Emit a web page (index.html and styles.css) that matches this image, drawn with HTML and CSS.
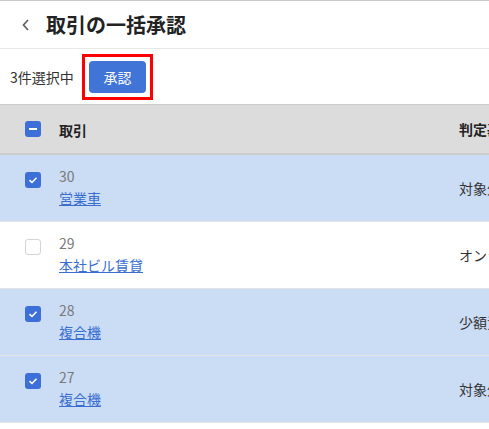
FILE: index.html
```html
<!DOCTYPE html>
<html lang="ja">
<head>
<meta charset="utf-8">
<link rel="stylesheet" href="styles.css">
</head>
<body>
<div class="page">
  <header class="topbar">
    <svg class="back" width="10" height="14" viewBox="0 0 10 14"><path d="M7 2 L2.5 7 L7 12" fill="none" stroke="#666" stroke-width="1.8"/></svg>
    <h1 class="title">取引の一括承認</h1>
  </header>
  <div class="toolbar">
    <span class="count">3件選択中</span>
    <span class="highlight"><button class="approve">承認</button></span>
  </div>
  <div class="table">
    <div class="row head">
      <div class="cb-cell"><span class="cb on"><svg width="16" height="16" viewBox="0 0 16 16"><path d="M4 8 H12" stroke="#fff" stroke-width="2"/></svg></span></div>
      <div class="main-cell"><span class="th">取引</span></div>
      <div class="side-cell"><span class="th">判定基準</span></div>
    </div>
    <div class="row sel">
      <div class="cb-cell"><span class="cb on"><svg width="16" height="16" viewBox="0 0 16 16"><path d="M4.5 8.2 L7 10.5 L11.5 5.8" fill="none" stroke="#fff" stroke-width="1.6"/></svg></span></div>
      <div class="main-cell"><div class="num">30</div><a class="link" href="#">営業車</a></div>
      <div class="side-cell"><span class="val">対象外</span></div>
    </div>
    <div class="row">
      <div class="cb-cell"><span class="cb"></span></div>
      <div class="main-cell"><div class="num">29</div><a class="link" href="#">本社ビル賃貸</a></div>
      <div class="side-cell"><span class="val">オンライン</span></div>
    </div>
    <div class="row sel">
      <div class="cb-cell"><span class="cb on"><svg width="16" height="16" viewBox="0 0 16 16"><path d="M4.5 8.2 L7 10.5 L11.5 5.8" fill="none" stroke="#fff" stroke-width="1.6"/></svg></span></div>
      <div class="main-cell"><div class="num">28</div><a class="link" href="#">複合機</a></div>
      <div class="side-cell"><span class="val">少額資産</span></div>
    </div>
    <div class="row sel">
      <div class="cb-cell"><span class="cb on"><svg width="16" height="16" viewBox="0 0 16 16"><path d="M4.5 8.2 L7 10.5 L11.5 5.8" fill="none" stroke="#fff" stroke-width="1.6"/></svg></span></div>
      <div class="main-cell"><div class="num">27</div><a class="link" href="#">複合機</a></div>
      <div class="side-cell"><span class="val">対象外</span></div>
    </div>
  </div>
</div>
</body>
</html>
```

FILE: styles.css
```css
html, body {
  margin: 0;
  padding: 0;
  background: #fff;
}
body {
  width: 489px;
  height: 429px;
  overflow: hidden;
  font-family: "Noto Sans CJK JP", "Noto Sans", sans-serif;
  color: #222;
}
.page {
  border-top: 1px solid #cacaca;
  width: 489px;
  overflow: hidden;
}
.topbar {
  height: 47px;
  display: flex;
  align-items: center;
  border-bottom: 1px solid #e8e8e8;
  padding-left: 21px;
}
.back {
  display: block;
  margin-right: 15px;
}
.title {
  margin: 0;
  font-size: 20px;
  font-weight: 700;
  color: #222;
}
.toolbar {
  height: 55px;
  display: flex;
  align-items: center;
  padding-left: 10px;
}
.count {
  font-size: 14px;
  color: #333;
  width: 72px;
}
.highlight {
  display: block;
  border: 3px solid #ff0000;
  padding: 4px;
  line-height: 0;
}
.approve {
  width: 57px;
  height: 32px;
  border: none;
  border-radius: 4px;
  background: #4074d6;
  color: #fff;
  font-family: inherit;
  font-size: 14px;
  line-height: 32px;
  padding: 0;
}
.table {
  width: 560px;
}
.row {
  display: flex;
  height: 66px;
  border-bottom: 1px solid #e4e4e4;
  background: #fff;
}
.row.sel {
  background: #cbdcf5;
}
.row.head {
  height: 48px;
  background: #dcdcdc;
  border-top: 1px solid #cccccc;
  border-bottom: 2px solid #cccccc;
  align-items: center;
}
.cb-cell {
  flex: none;
  width: 34px;
  padding-left: 25px;
  padding-top: 17px;
}
.row.head .cb-cell {
  padding-top: 0;
  height: 16px;
}
.cb {
  display: block;
  width: 16px;
  height: 16px;
  box-sizing: border-box;
  border-radius: 3px;
  border: 1.5px solid #d4d4d4;
  background: #fff;
}
.cb.on {
  border: none;
  background: #3d6fd8;
}
.cb svg {
  display: block;
}
.main-cell {
  flex: none;
  width: 400px;
  padding-top: 12px;
}
.row.head .main-cell,
.row.head .side-cell {
  padding-top: 0;
}
.th {
  font-size: 14px;
  font-weight: 700;
  color: #222;
}
.num {
  font-size: 14px;
  color: #7a7a7a;
  line-height: 18px;
}
.link {
  display: inline-block;
  font-size: 14px;
  line-height: 19px;
  color: #3a6fd0;
  text-decoration: underline;
}
.side-cell {
  flex: none;
  width: 100px;
  display: flex;
  align-items: center;
  white-space: nowrap;
}
.val {
  font-size: 14px;
  color: #333;
}
```
